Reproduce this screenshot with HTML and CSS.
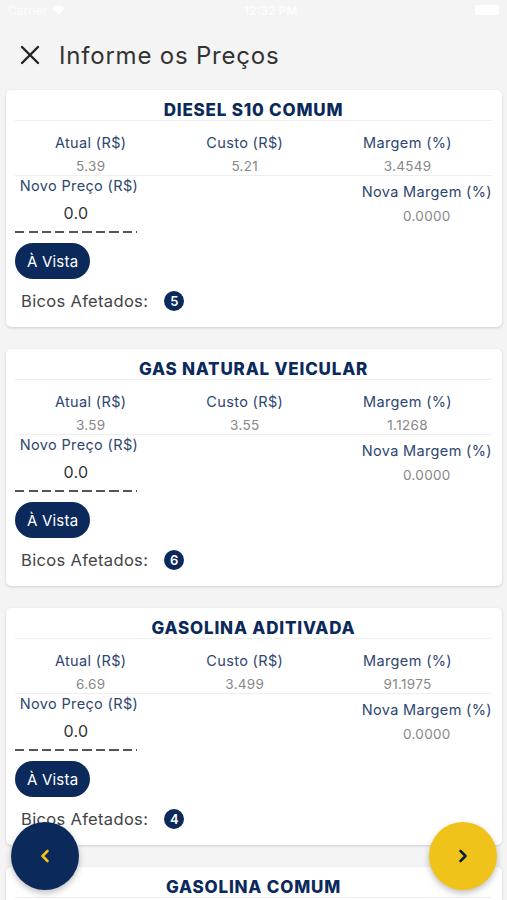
FILE: index.html
```html
<!DOCTYPE html>
<html lang="pt-BR">
  <head>
    <meta charset="UTF-8" />
    <meta name="viewport" content="width=device-width, initial-scale=1.0" />
    <title>Informe os Preços</title>
    <link rel="stylesheet" href="styles.css">
  </head>
  <body>
    <div class="status-bar">
      <span class="carrier">Carrier
        <svg width="14" height="10" viewBox="0 0 14 10"><path d="M7 9.5 1 3.2a8.6 8.6 0 0 1 12 0z" fill="#fff"/></svg>
      </span>
      <span class="clock">12:32 PM</span>
      <span class="battery"></span>
    </div>

    <header class="top-bar">
      <button class="close-btn" aria-label="Fechar">
        <svg width="20" height="20" viewBox="0 0 20 20"><path d="M2 2 18 18M18 2 2 18" stroke="#222" stroke-width="2.4" stroke-linecap="round"/></svg>
      </button>
      <h1>Informe os Preços</h1>
    </header>

    <main class="list">
      <section class="card">
        <h2 class="card-title">DIESEL S10 COMUM</h2>
        <div class="stats">
          <div class="stat"><span class="stat-label">Atual (R$)</span><span class="stat-value">5.39</span></div>
          <div class="stat"><span class="stat-label">Custo (R$)</span><span class="stat-value">5.21</span></div>
          <div class="stat"><span class="stat-label">Margem (%)</span><span class="stat-value">3.4549</span></div>
        </div>
        <div class="edit-row">
          <div class="new-price">
            <label class="stat-label">Novo Preço (R$)</label>
            <input class="price-input" type="text" value="0.0" />
          </div>
          <div class="stat new-margin"><span class="stat-label">Nova Margem (%)</span><span class="stat-value">0.0000</span></div>
        </div>
        <button class="pay-btn">À Vista</button>
        <div class="nozzles">Bicos Afetados: <span class="badge">5</span></div>
      </section>

      <section class="card">
        <h2 class="card-title">GAS NATURAL VEICULAR</h2>
        <div class="stats">
          <div class="stat"><span class="stat-label">Atual (R$)</span><span class="stat-value">3.59</span></div>
          <div class="stat"><span class="stat-label">Custo (R$)</span><span class="stat-value">3.55</span></div>
          <div class="stat"><span class="stat-label">Margem (%)</span><span class="stat-value">1.1268</span></div>
        </div>
        <div class="edit-row">
          <div class="new-price">
            <label class="stat-label">Novo Preço (R$)</label>
            <input class="price-input" type="text" value="0.0" />
          </div>
          <div class="stat new-margin"><span class="stat-label">Nova Margem (%)</span><span class="stat-value">0.0000</span></div>
        </div>
        <button class="pay-btn">À Vista</button>
        <div class="nozzles">Bicos Afetados: <span class="badge">6</span></div>
      </section>

      <section class="card">
        <h2 class="card-title">GASOLINA ADITIVADA</h2>
        <div class="stats">
          <div class="stat"><span class="stat-label">Atual (R$)</span><span class="stat-value">6.69</span></div>
          <div class="stat"><span class="stat-label">Custo (R$)</span><span class="stat-value">3.499</span></div>
          <div class="stat"><span class="stat-label">Margem (%)</span><span class="stat-value">91.1975</span></div>
        </div>
        <div class="edit-row">
          <div class="new-price">
            <label class="stat-label">Novo Preço (R$)</label>
            <input class="price-input" type="text" value="0.0" />
          </div>
          <div class="stat new-margin"><span class="stat-label">Nova Margem (%)</span><span class="stat-value">0.0000</span></div>
        </div>
        <button class="pay-btn">À Vista</button>
        <div class="nozzles">Bicos Afetados: <span class="badge">4</span></div>
      </section>

      <!-- o resto deste cartão fica abaixo da dobra -->
      <section class="card card-partial">
        <h2 class="card-title">GASOLINA COMUM</h2>
      </section>
    </main>

    <button class="fab fab-prev" aria-label="Anterior">
      <svg width="12" height="14" viewBox="0 0 12 14"><path d="M8.5 2 3.5 7l5 5" fill="none" stroke="#f0c31b" stroke-width="2.6" stroke-linecap="round" stroke-linejoin="round"/></svg>
    </button>
    <button class="fab fab-next" aria-label="Próximo">
      <svg width="12" height="14" viewBox="0 0 12 14"><path d="M3.5 2l5 5-5 5" fill="none" stroke="#0d2340" stroke-width="2.6" stroke-linecap="round" stroke-linejoin="round"/></svg>
    </button>
  </body>
</html>
```

FILE: styles.css
```css
body {
  font-family: Inter, "Open Sans", sans-serif;
  margin: 0;
  padding: 0;
  background-color: #f4f4f4;
  overflow: hidden;
  height: 900px;
}

.status-bar {
  height: 20px;
  display: flex;
  align-items: center;
  justify-content: space-between;
  padding: 0 8px;
  font-size: 12px;
  color: rgba(255, 255, 255, 0.85);
}

.carrier {
  display: flex;
  align-items: center;
  gap: 5px;
}

.clock {
  font-weight: 600;
}

.battery {
  width: 24px;
  height: 10px;
  border-radius: 2px;
  background-color: rgba(255, 255, 255, 0.9);
}

.top-bar {
  height: 70px;
  display: flex;
  align-items: center;
  padding: 0 20px;
  gap: 19px;
}

.close-btn {
  border: none;
  background: none;
  padding: 0;
  width: 20px;
  height: 20px;
  display: flex;
}

h1 {
  margin: 0;
  font-size: 24px;
  font-weight: 400;
  letter-spacing: 0.8px;
  color: #333;
}

.card {
  background-color: #fff;
  margin: 0 5px 22px 6px;
  padding: 10px 10px 15px 9px;
  border-radius: 5px;
  box-shadow: 0 1px 3px rgba(0, 0, 0, 0.16);
}

.card-partial {
  height: 120px;
}

.card-title {
  margin: 0;
  font-size: 17px;
  line-height: 20px;
  font-weight: 800;
  letter-spacing: 0.8px;
  color: #0b2a5b;
  text-align: center;
  border-bottom: 1px solid #eee;
}

.stats {
  display: flex;
  justify-content: space-around;
  margin-top: 12px;
  border-bottom: 1px solid #eee;
}

.stat {
  display: flex;
  flex-direction: column;
  align-items: center;
  gap: 4px;
}

.stat-label {
  font-size: 14.5px;
  line-height: 20px;
  letter-spacing: 0.35px;
  color: #2e4670;
  white-space: nowrap;
}

.stat-value {
  font-size: 13.5px;
  line-height: 18px;
  letter-spacing: 0.3px;
  color: #888;
}

.edit-row {
  display: flex;
  justify-content: space-between;
  align-items: flex-start;
}

.new-price {
  width: 122px;
  display: flex;
  flex-direction: column;
  align-items: center;
}

.new-price .stat-label {
  padding-left: 6px;
}

.price-input {
  width: 100%;
  height: 37px;
  box-sizing: border-box;
  border: none;
  padding: 0 0 4px;
  font-family: inherit;
  font-size: 16px;
  letter-spacing: 0.3px;
  color: #333;
  text-align: center;
  background: repeating-linear-gradient(to right, #555 0 9px, transparent 9px 13.5px) bottom left / 100% 2px no-repeat;
}

.new-margin {
  padding-top: 6px;
}

.new-margin .stat-value {
  line-height: 20px;
}

.pay-btn {
  display: block;
  margin-top: 10px;
  height: 36px;
  padding: 0 12px;
  border: none;
  border-radius: 18px;
  background-color: #0b2a5b;
  color: #fff;
  font-family: inherit;
  font-size: 15px;
  letter-spacing: 0.2px;
}

.nozzles {
  margin-top: 11px;
  padding-left: 6px;
  line-height: 22px;
  font-size: 16.5px;
  letter-spacing: 0.33px;
  color: #444;
  display: flex;
  align-items: center;
}

.badge {
  margin-left: 16px;
  width: 20px;
  height: 20px;
  border-radius: 50%;
  background-color: #0b2a5b;
  color: #fff;
  font-size: 13px;
  font-weight: 600;
  letter-spacing: 0;
  display: flex;
  align-items: center;
  justify-content: center;
}

.fab {
  position: fixed;
  top: 822px;
  width: 68px;
  height: 68px;
  border: none;
  border-radius: 50%;
  display: flex;
  align-items: center;
  justify-content: center;
  box-shadow: 0 3px 6px rgba(0, 0, 0, 0.25);
}

.fab-prev {
  left: 11px;
  background-color: #0b2a5b;
}

.fab-next {
  right: 10px;
  background-color: #f0c31b;
}
```
